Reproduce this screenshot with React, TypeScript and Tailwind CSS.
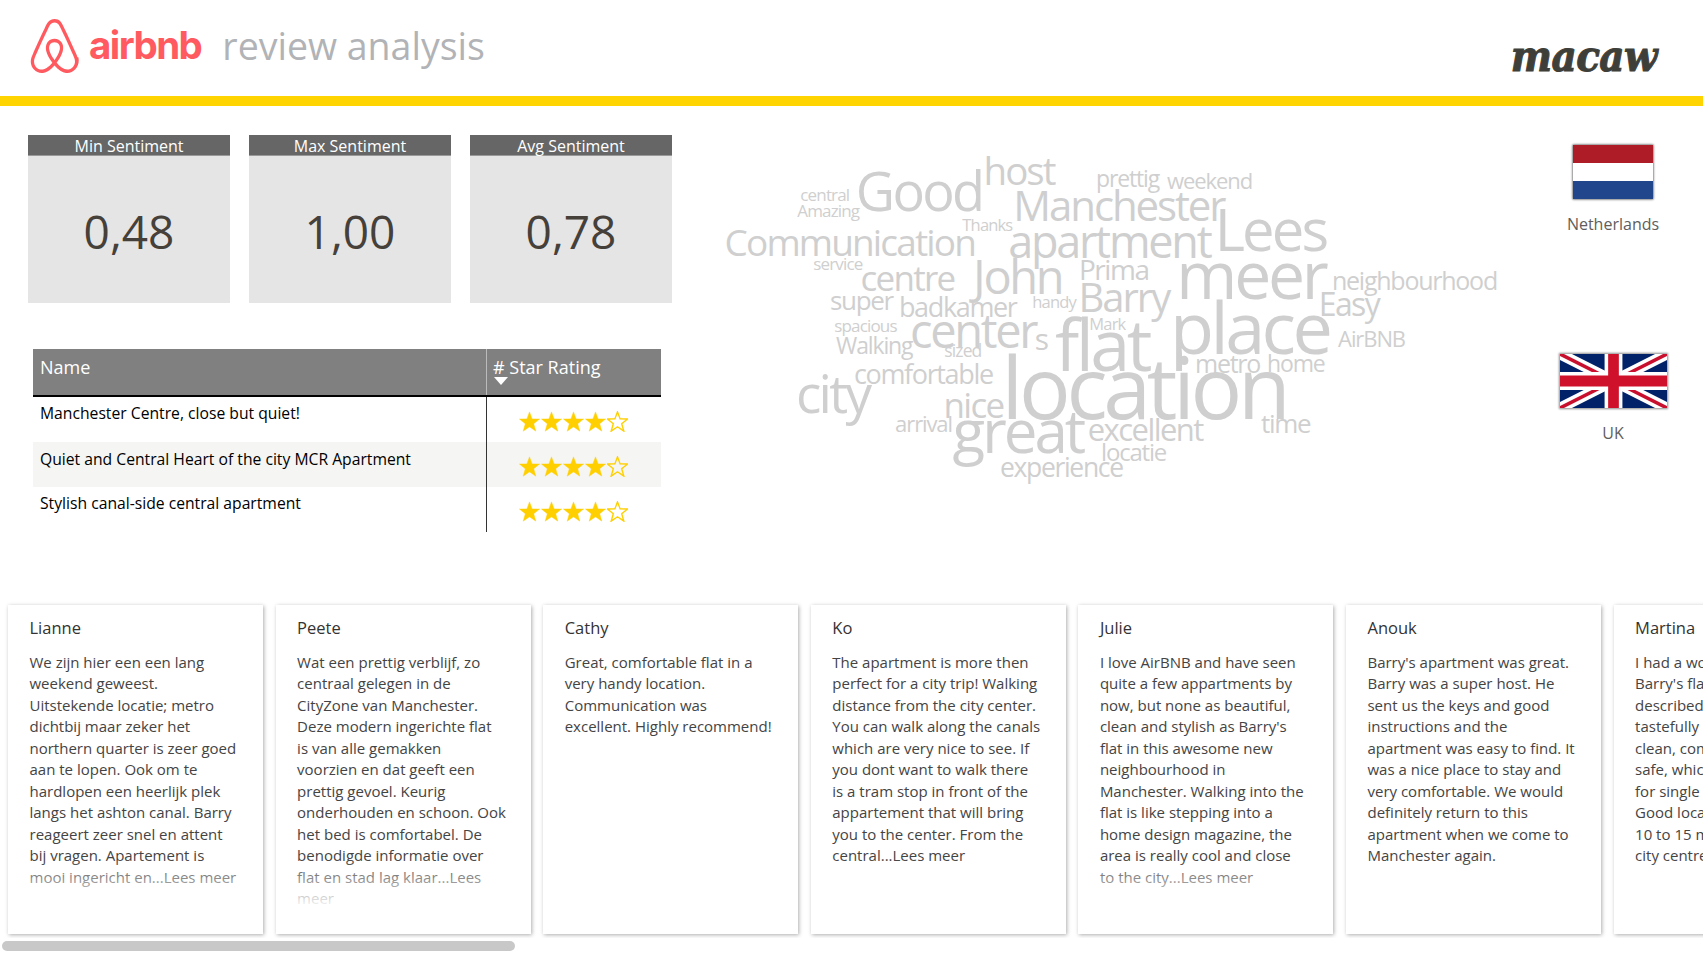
const sans = "font-['Open_Sans',sans-serif]";

const tiles = [
  { title: "Min Sentiment", value: "0,48" },
  { title: "Max Sentiment", value: "1,00" },
  { title: "Avg Sentiment", value: "0,78" },
];

const hotels = [
  "Manchester Centre, close but quiet!",
  "Quiet and Central Heart of the city MCR Apartment",
  "Stylish canal-side central apartment",
];

// word cloud: left edge, vertical centre (page px) and font size
const CLOUD_X = 700;
const CLOUD_Y = 106;
const words: [string, number, number, number][] = [
  ["central", 801, 195, 17],
  ["Amazing", 798, 211, 17],
  ["Good", 858, 192, 54],
  ["host", 985, 172, 38.5],
  ["prettig", 1097, 179, 23],
  ["weekend", 1168, 181, 22],
  ["Manchester", 1015, 207, 42],
  ["Thanks", 963, 226, 16.5],
  ["Communication", 726, 242, 37],
  ["apartment", 1010, 242, 45],
  ["Lees", 1217, 231, 58],
  ["service", 814, 264, 17],
  ["centre", 862, 278, 35],
  ["John", 975, 278, 47],
  ["Prima", 1080, 270, 28],
  ["meer", 1179, 276, 66],
  ["neighbourhood", 1333, 281, 25],
  ["super", 831, 301, 26],
  ["badkamer", 900, 307, 27],
  ["handy", 1033, 303, 16.5],
  ["Barry", 1080, 299, 40],
  ["Easy", 1320, 305, 32],
  ["spacious", 835, 326, 17],
  ["Mark", 1090, 325, 16.5],
  ["center", 912, 332, 47],
  ["s", 1036, 340, 30],
  ["flat", 1058, 346, 72],
  ["place", 1173, 329, 72],
  ["AirBNB", 1339, 339, 22],
  ["Walking", 837, 346, 23],
  ["sized", 945, 352, 17.5],
  ["comfortable", 855, 374, 27],
  ["metro", 1196, 364, 25],
  ["home", 1268, 364, 23],
  ["location", 1005, 389, 86],
  ["city", 798, 394, 53],
  ["nice", 945, 405, 35],
  ["arrival", 896, 424, 22],
  ["great", 955, 432, 60],
  ["excellent", 1089, 430, 31],
  ["time", 1262, 424, 26],
  ["locatie", 1102, 453, 24],
  ["experience", 1001, 468, 26.5],
];

const reviews = [
  {
    name: "Lianne",
    lines: [
      "We zijn hier een een lang",
      "weekend geweest.",
      "Uitstekende locatie; metro",
      "dichtbij maar zeker het",
      "northern quarter is zeer goed",
      "aan te lopen. Ook om te",
      "hardlopen een heerlijk plek",
      "langs het ashton canal. Barry",
      "reageert zeer snel en attent",
      "bij vragen. Apartement is",
      "mooi ingericht en...Lees meer",
    ],
  },
  {
    name: "Peete",
    lines: [
      "Wat een prettig verblijf, zo",
      "centraal gelegen in de",
      "CityZone van Manchester.",
      "Deze modern ingerichte flat",
      "is van alle gemakken",
      "voorzien en dat geeft een",
      "prettig gevoel. Keurig",
      "onderhouden en schoon. Ook",
      "het bed is comfortabel. De",
      "benodigde informatie over",
      "flat en stad lag klaar...Lees",
      "meer",
    ],
  },
  {
    name: "Cathy",
    lines: [
      "Great, comfortable flat in a",
      "very handy location.",
      "Communication was",
      "excellent. Highly recommend!",
    ],
  },
  {
    name: "Ko",
    lines: [
      "The apartment is more then",
      "perfect for a city trip! Walking",
      "distance from the city center.",
      "You can walk along the canals",
      "which are very nice to see. If",
      "you dont want to walk there",
      "is a tram stop in front of the",
      "appartement that will bring",
      "you to the center. From the",
      "central...Lees meer",
    ],
  },
  {
    name: "Julie",
    lines: [
      "I love AirBNB and have seen",
      "quite a few appartments by",
      "now, but none as beautiful,",
      "clean and stylish as Barry's",
      "flat in this awesome new",
      "neighbourhood in",
      "Manchester. Walking into the",
      "flat is like stepping into a",
      "home design magazine, the",
      "area is really cool and close",
      "to the city...Lees meer",
    ],
  },
  {
    name: "Anouk",
    lines: [
      "Barry's apartment was great.",
      "Barry was a super host. He",
      "sent us the keys and good",
      "instructions and the",
      "apartment was easy to find. It",
      "was a nice place to stay and",
      "very comfortable. We would",
      "definitely return to this",
      "apartment when we come to",
      "Manchester again.",
    ],
  },
  {
    name: "Martina",
    lines: [
      "I had a wonderful stay in",
      "Barry's flat. It is exactly as",
      "described: modern and",
      "tastefully decorated, very",
      "clean, comfortable and",
      "safe, which is important",
      "for single travellers.",
      "Good location, only",
      "10 to 15 minutes from the",
      "city centre.",
    ],
  },
];

function AirbnbLogo() {
  return (
    <svg viewBox="0 0 24 24" preserveAspectRatio="none" className="h-[54px] w-[51px] fill-[#ff5a5f]">
      <path d="M12.001 18.275c-1.353-1.697-2.148-3.184-2.413-4.457-.263-1.027-.16-1.848.291-2.465.477-.71 1.188-1.056 2.121-1.056s1.643.345 2.12 1.063c.446.61.558 1.432.286 2.465-.291 1.298-1.085 2.785-2.412 4.458zm9.601 1.14c-.185 1.246-1.034 2.28-2.2 2.783-2.253.98-4.483-.583-6.392-2.704 3.157-3.951 3.74-7.028 2.385-9.018-.795-1.14-1.933-1.695-3.394-1.695-2.944 0-4.563 2.49-3.927 5.382.37 1.565 1.352 3.343 2.917 5.332-.98 1.085-1.91 1.856-2.732 2.333-.636.344-1.245.558-1.828.609-2.679.399-4.778-2.2-3.825-4.88.132-.345.395-.98.845-1.961l.025-.053c1.464-3.178 3.242-6.79 5.285-10.795l.053-.132.58-1.116c.45-.822.635-1.19 1.351-1.643.346-.21.77-.315 1.246-.315.954 0 1.698.558 2.016 1.007.158.239.345.557.582.953l.558 1.089.08.159c2.041 4.004 3.821 7.608 5.279 10.794l.026.025.533 1.22.318.764c.243.613.294 1.222.213 1.858zm1.22-2.39c-.186-.583-.505-1.271-.9-2.094v-.03c-1.889-4.006-3.642-7.608-5.307-10.844l-.111-.163C15.317 1.461 14.468 0 12.001 0c-2.44 0-3.476 1.695-4.535 3.898l-.081.16c-1.669 3.236-3.421 6.843-5.303 10.847v.053l-.559 1.22c-.21.504-.317.768-.345.847C-.172 20.74 2.611 24 5.98 24c.027 0 .132 0 .265-.027h.372c1.75-.213 3.554-1.325 5.384-3.317 1.829 1.989 3.635 3.104 5.382 3.317h.372c.133.027.239.027.265.027 3.37.003 6.152-3.261 5.203-6.975z" />
    </svg>
  );
}

function UkFlag() {
  return (
    <svg viewBox="0 0 60 30" preserveAspectRatio="none" className="h-[54px] w-[107px] shadow-[0_0_2px_1px_rgba(0,0,0,0.45)]">
      <rect width="60" height="30" fill="#012169" />
      <path d="M0 0 60 30M60 0 0 30" stroke="#fff" strokeWidth="6" />
      <path d="M0 0 30 15M60 30 30 15M60 0 30 15M0 30 30 15" stroke="#c8102e" strokeWidth="2" />
      <path d="M30 0V30M0 15H60" stroke="#fff" strokeWidth="10" />
      <path d="M30 0V30M0 15H60" stroke="#d0112b" strokeWidth="6" />
    </svg>
  );
}

function RatingStar({ filled }: { filled: boolean }) {
  return (
    <svg viewBox="0 0 24 24" className="h-[21px] w-[21px]">
      <polygon
        points="12,1 15,9 23.5,9.2 16.8,14.5 19.2,23 12,18 4.8,23 7.2,14.5 0.5,9.2 9,9"
        fill={filled ? "#ffcf00" : "none"}
        stroke="#ffcf00"
        strokeWidth={filled ? 0.5 : 1.6}
      />
    </svg>
  );
}

function StarRow() {
  return (
    <div className="flex gap-[1px]">
      {[true, true, true, true, false].map((filled, i) => (
        <RatingStar key={i} filled={filled} />
      ))}
    </div>
  );
}

function SentimentTile({ title, value }: { title: string; value: string }) {
  return (
    <div className="flex h-[168px] w-[202px] flex-col bg-[#e5e5e5]">
      <div className="flex h-[21px] items-center justify-center border-b border-[#999] bg-[#666] pt-[2px] text-[16px] text-white">
        {title}
      </div>
      <div className="flex flex-1 items-center justify-center pt-[4px] text-[46px] text-[#45403a]">{value}</div>
    </div>
  );
}

function ReviewCard({ name, lines }: { name: string; lines: string[] }) {
  return (
    <div className="relative h-[329px] w-[255px] shrink-0 bg-white pl-[21.5px] pt-[12px] shadow-[1px_1px_4px_rgba(0,0,0,0.32)]">
      <div className="text-[16.5px] leading-[22px] font-medium text-[#333]">{name}</div>
      <div className="mt-[13px] text-[15px] leading-[21.45px] whitespace-nowrap text-[#444]">
        {lines.map((line) => (
          <div key={line}>{line}</div>
        ))}
      </div>
      <div className="absolute inset-x-0 bottom-[25px] h-[50px] bg-linear-to-t from-white to-transparent" />
    </div>
  );
}

export default function App() {
  return (
    <div className={`flex h-[955px] w-full flex-col overflow-hidden bg-white ${sans}`}>
      <header className="flex h-[96px] items-center justify-between pb-[4px] pl-[29px] pr-[46px]">
        <div className="flex items-center">
          <AirbnbLogo />
          <span className="ml-[9px] font-['Inter',sans-serif] text-[38.5px] font-bold tracking-[-0.04em] text-[#ff5a5f]">
            airbnb
          </span>
          <span className="ml-[21px] text-[37.5px] text-[#b1b3b6]">review analysis</span>
        </div>
        <span className="mt-[20px] scale-y-110 font-['DejaVu_Serif',serif] text-[39px] font-bold italic tracking-[-0.015em] text-[#3f3f3a] [-webkit-text-stroke:1px_#3f3f3a]">
          macaw
        </span>
      </header>
      <div className="h-[10px] bg-[#ffd400]" />

      <main className="flex h-[495px]">
        <div className="w-[700px] pl-[28px] pt-[29px]">
          <div className="flex gap-[19px]">
            {tiles.map((t) => (
              <SentimentTile key={t.title} {...t} />
            ))}
          </div>
          <div className="ml-[5px] mt-[46px] w-[628px]">
            <div className="grid h-[48px] grid-cols-[453px_175px] border-b-2 border-black bg-[#808080] text-[18px] text-white">
              <div className="pl-[7px] pt-[5px]">Name</div>
              <div className="border-l border-[#bbb] pl-[6px] pt-[5px]">
                # Star Rating
                <div className="ml-[1px] mt-[-4px] h-0 w-0 border-x-[7px] border-t-[8px] border-x-transparent border-t-white" />
              </div>
            </div>
            {hotels.map((name, i) => (
              <div key={name} className={`grid h-[45px] grid-cols-[453px_175px] ${i === 1 ? "bg-[#f5f5f3]" : ""}`}>
                <div className={`pl-[7px] text-[15.7px] text-black ${i === 1 ? "pt-[6px]" : "pt-[5px]"}`}>{name}</div>
                <div className="border-l border-[#333] pl-[32px] pt-[13.5px]">
                  <StarRow />
                </div>
              </div>
            ))}
          </div>
        </div>

        <div className="relative flex-1">
          {words.map(([word, x, y, size]) => (
            <span
              key={word}
              className="absolute -translate-y-1/2 leading-none tracking-[-0.05em] whitespace-nowrap text-[#cfcfcf]"
              style={{ left: x - CLOUD_X - size * 0.04, top: y - CLOUD_Y - size * 0.04, fontSize: size }}
            >
              {word}
            </span>
          ))}
        </div>

        <div className="flex w-[180px] shrink-0 flex-col items-center pt-[39px]">
          <div className="flex h-[54px] w-[80px] flex-col rounded-[1px] shadow-[0_0_2px_1px_rgba(0,0,0,0.45)]">
            <div className="flex-1 bg-[#ae1c28]" />
            <div className="flex-1 bg-white" />
            <div className="flex-1 bg-[#21468b]" />
          </div>
          <div className="mt-[13px] text-[16px] text-[#605e5c]">Netherlands</div>
          <div className="mt-[118px]">
            <UkFlag />
          </div>
          <div className="mt-[13px] text-[16px] text-[#605e5c]">UK</div>
        </div>
      </main>

      <section className="flex gap-[12.6px] overflow-hidden pb-[4px] pl-[8px] pt-[4px]">
        {reviews.map((r) => (
          <ReviewCard key={r.name} {...r} />
        ))}
      </section>
      <div className="mt-[3px] ml-[2px] h-[10px] w-[513px] rounded-full bg-[#c8c8c8]" />
    </div>
  );
}
